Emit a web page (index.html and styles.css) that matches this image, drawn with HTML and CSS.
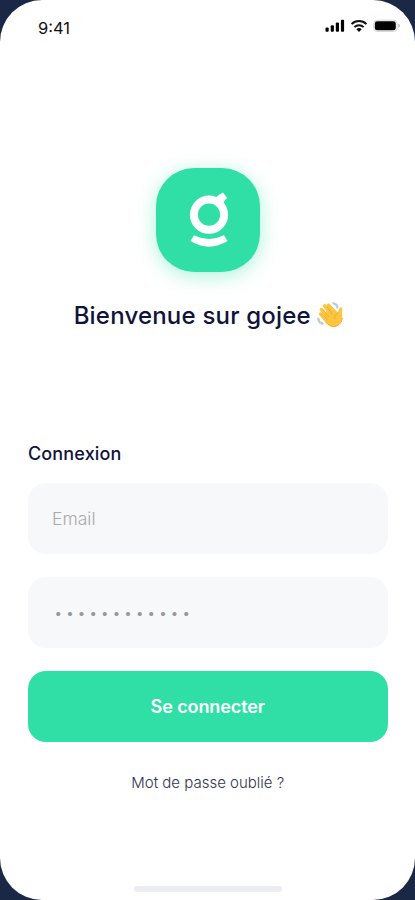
FILE: index.html
```html
<!DOCTYPE html>
<html lang="fr">
<head>
    <meta charset="UTF-8">
    <meta name="viewport" content="width=device-width, initial-scale=1.0">
    <title>gojee - Connexion</title>
    <link rel="stylesheet" href="styles.css">
</head>
<body>
    <div id="screen">
        <header class="status-bar">
            <span class="time">9:41</span>
            <div class="status-icons">
                <svg class="signal" width="20" height="14" viewBox="0 0 20 14">
                    <rect x="0.5" y="8.5" width="3.2" height="4.3" rx="1"/>
                    <rect x="5.7" y="6.3" width="3.2" height="6.5" rx="1"/>
                    <rect x="10.8" y="3.5" width="3.2" height="9.3" rx="1"/>
                    <rect x="15.9" y="0.8" width="3.2" height="12" rx="1"/>
                </svg>
                <svg class="wifi" width="18" height="14" viewBox="0 0 18 14">
                    <path d="M1.6 5.1a10.6 10.6 0 0 1 14.8 0M4.4 8.1a6.6 6.6 0 0 1 9.2 0" fill="none" stroke="#111" stroke-width="2"/>
                    <path d="M6.4 10.2a3.8 3.8 0 0 1 5.2 0L9 12.9z"/>
                </svg>
                <svg class="battery" width="28" height="14" viewBox="0 0 28 14">
                    <rect x="0.7" y="1.2" width="23.4" height="11.2" rx="3.4" fill="#fff" stroke="#d4d4d4"/>
                    <rect x="1.8" y="2.3" width="21" height="9" rx="2.4" fill="#000"/>
                    <path d="M25.3 4.8c2 .6 2 3.4 0 4z" fill="#b5b5b5"/>
                </svg>
            </div>
        </header>

        <main>
            <div class="logo">
                <svg width="104" height="104" viewBox="0 0 104 104">
                    <circle cx="53" cy="46.700" r="15.100" fill="none" stroke="#fff" stroke-width="8"/>
                    <path d="M56 30.500C61 30 62.500 26.500 67 24.600L71.300 30.300C68.500 31.500 68 33.500 67.500 36.500L62 38z" fill="#fff"/>
                    <path d="M38 67.300Q53 74.700 68 67.300L71.600 73Q53 84.300 34.400 73z" fill="#fff"/>
                </svg>
            </div>
            <h1>
                <span>Bienvenue sur gojee</span>
                <svg class="wave" width="28" height="28" viewBox="0 0 28 28">
                    <path d="M17.500 2.200l2.800 1.600 1 2.600M2.200 17.800l1.400 3.300 2.900 1.600" fill="none" stroke="#c3cad0" stroke-width="2.400" stroke-linecap="round"/>
                    <path d="M8 18.500C12 25.500 19 27.500 23.500 23c3.500-3.500 2.800-7 2.600-11 0-2.500.8-5-.8-5.400-2.300-.4-2.500 2.400-3.300 5L13 3z" fill="#fcc540"/>
                    <path d="M12.300 4l6.500 8.500M8.500 4.800l7 9.500M5.300 8.500l7.500 9M4.500 13l6 7" fill="none" stroke="#fcc540" stroke-width="3.400" stroke-linecap="round"/>
                    <path d="M11 5.800l5.500 7.500M7.300 8.700l5.500 7M6 12.500l5 6M22 11.500c-2.500 1.800-3.700 3.800-3.300 6.300" fill="none" stroke="#e8a52e" stroke-width=".7" stroke-linecap="round"/>
                    <path d="M10 21.300c4 5.200 9.500 5.500 13.500 1.700 2-2 2.700-4 2.800-6" fill="none" stroke="#eeaa20" stroke-width="1"/>
                </svg>
            </h1>

            <form class="login">
                <h2>Connexion</h2>
                <input class="field" type="email" placeholder="Email" aria-label="Email">
                <input class="field password" type="password" placeholder="••••••••••••" aria-label="Mot de passe">
                <button type="button">Se connecter</button>
            </form>
            <a class="forgot">Mot de passe oublié ?</a>
        </main>

        <div class="home-indicator"></div>
    </div>
</body>
</html>
```

FILE: styles.css
```css
* {
    margin: 0;
    padding: 0;
    box-sizing: border-box;
}
body {
    background-color: #1a2745;
    font-family: Inter, "Liberation Sans", sans-serif;
    color: #10143a;
}
#screen {
    width: 100%;
    height: 900px;
    background-color: #fff;
    border-radius: 42px;
    display: flex;
    flex-direction: column;
    align-items: center;
    overflow: hidden;
}
.status-bar {
    width: 100%;
    height: 54px;
    padding: 0 14px 0 38px;
    display: flex;
    justify-content: space-between;
    align-items: center;
}
.time {
    padding-top: 1px;
    font-size: 16.5px;
    font-weight: 400;
    color: #111;
}
.status-icons {
    display: flex;
    gap: 5px;
    margin-top: -2px;
}
main {
    width: 100%;
    padding: 114px 27.5px 0 28px;
    display: flex;
    flex-direction: column;
    align-items: center;
}
.logo {
    width: 104px;
    height: 104px;
    margin-left: 1px;
    border-radius: 38px;
    background-color: #30dfa6;
    box-shadow: 0 4px 20px rgba(50, 224, 168, 0.4);
}
h1 {
    height: 32px;
    margin-top: 27px;
    margin-left: 2px;
    display: flex;
    align-items: center;
    gap: 5px;
    font-size: 24px;
    font-weight: 500;
    letter-spacing: 0.2px;
    white-space: nowrap;
}
.login {
    width: 100%;
    margin-top: 111px;
    display: flex;
    flex-direction: column;
}
h2 {
    height: 24px;
    line-height: 23px;
    margin-bottom: 17px;
    font-size: 18px;
    font-weight: 500;
    letter-spacing: 0.15px;
}
.field {
    width: 100%;
    height: 71px;
    margin-bottom: 23px;
    padding: 0 24px;
    border: none;
    border-radius: 18px;
    background-color: #f6f8fa;
    font-family: inherit;
    font-size: 17.5px;
    font-weight: 300;
}
.field::placeholder {
    color: #a9a9ad;
}
.password {
    padding: 0 26px;
    font-size: 15px;
    letter-spacing: 3.2px;
}
.password::placeholder {
    color: #98989c;
}
button {
    height: 71px;
    border: none;
    border-radius: 18px;
    background-color: #30dfa6;
    font-family: inherit;
    font-size: 18px;
    font-weight: 600;
    letter-spacing: -0.1px;
    color: #fff;
}
.forgot {
    margin-top: 31px;
    line-height: 20px;
    font-size: 15px;
    font-weight: 300;
    color: #30334f;
}
.home-indicator {
    width: 148px;
    height: 6px;
    margin-top: auto;
    margin-bottom: 8px;
    border-radius: 3px;
    background-color: #ececf4;
}
```
